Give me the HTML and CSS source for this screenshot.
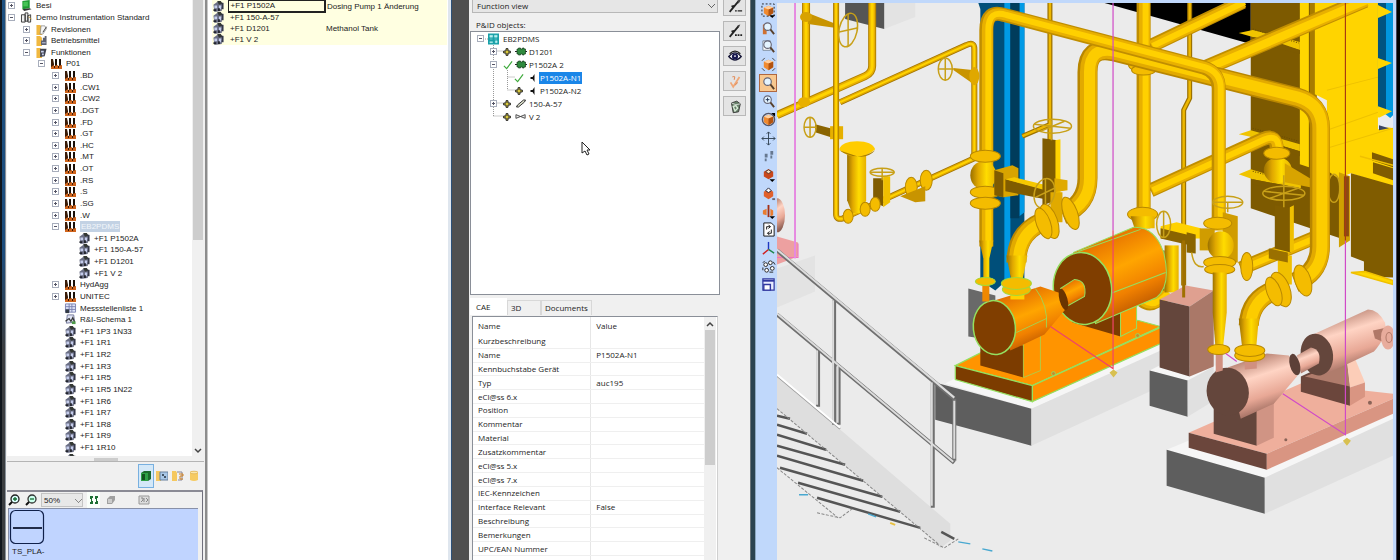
FILE: index.html
```html
<!DOCTYPE html>
<html lang="de">
<head>
<meta charset="utf-8">
<title>P&amp;ID objects</title>
<link rel="stylesheet" href="styles.css">
</head>
<body>
<svg class="defs" aria-hidden="true">
  <defs>
    <symbol id="i-plant" viewBox="0 0 13 11"><path d="M1 11V1h2l1 5V11z" fill="#3a1c08"/><path d="M5 1h2v8H5zM9 1h2v8H9z" fill="#1a1008"/><path d="M1 9l3-2v1l4-1v1l4-1v4H1z" fill="#d0641c"/><path d="M4 8h1v2H4zM8 8h1v2H8z" fill="#3a1c08"/></symbol>
    <symbol id="i-func" viewBox="0 0 13 12"><path d="M1 4l4-3 6 1-1 9-8 1z" fill="#6a6e84"/><path d="M5 0h4l2 3-4 1z" fill="#343834"/><path d="M2 5h3v3H2zM7 5h3l-1 4H7z" fill="#c4ccec"/><path d="M1 9h3v2H1zM6 8h2v3H6z" fill="#22242c"/><path d="M10 2h2v7h-2z" fill="#34384a"/></symbol>
    <symbol id="i-book" viewBox="0 0 13 12"><path d="M2 1l8-1v9l-8 1z" fill="#1f9a33"/><path d="M3 2h5v5H3z" fill="#45c455"/><path d="M2 10l8-1 2 1-8 2z" fill="#333"/></symbol>
    <symbol id="i-proj" viewBox="0 0 13 12"><path d="M1 3h4v8H1zM5 1h3v9H5zM8 4l3-1v8H8z" fill="#eee" stroke="#333"/><path d="M9 5l3 3" stroke="#c8a030"/></symbol>
    <symbol id="i-rev" viewBox="0 0 13 12"><path d="M1 1h4l2 2v9H1z" fill="#f0b840"/><path d="M6 2h4l2 3-4 6H5z" fill="#f5f5f5" stroke="#777" stroke-width=".7"/><path d="M8 9l4-6" stroke="#333"/></symbol>
    <symbol id="i-equip" viewBox="0 0 13 12"><path d="M1 1h4l2 2v9H1z" fill="#f0b840"/><path d="M6 6h2V3h2V1h2v10H6z" fill="#5c6070"/><path d="M7 8h4v1H7z" fill="#c9d2ee"/></symbol>
    <symbol id="i-funcs" viewBox="0 0 13 12"><path d="M1 1h4l2 2v9H1z" fill="#f0b840"/><path d="M5 2h7l-2 8-5 1z" fill="#404452"/><path d="M6 4h3v2H6zM7 7h2v2H7z" fill="#c9d2ee"/></symbol>
    <symbol id="i-list" viewBox="0 0 13 12"><path d="M1 1h11v9H1z" fill="#dfe5f8" stroke="#7a80b0"/><path d="M5 1v9M8 1v9M1 4h11M1 7h11" stroke="#7a80b0"/><path d="M1 7h4v4H1z" fill="#333a44"/></symbol>
    <symbol id="i-schema" viewBox="0 0 13 12"><path d="M3 1h7l1 8-9 1z" fill="#dfe3f4" stroke="#6d7396"/><path d="M1 8l4-3 2 3 2-4 2 5" fill="none" stroke="#333" stroke-width="1.3"/><path d="M8 8h4v3H8z" fill="#4f9a4a"/></symbol>
    <symbol id="i-mark" viewBox="0 0 8 8"><path d="M3 .7h2V3h2.3v2H5v2.300H3V5H.7V3H3z" fill="#d8c840" stroke="#222" stroke-width="1"/></symbol>
    <symbol id="i-check" viewBox="0 0 11 10"><path d="M1 6l3 3 6-8" fill="none" stroke="#3faa3c" stroke-width="1.300"/></symbol>
    <symbol id="i-vessel" viewBox="0 0 12 9"><path d="M0 4.500h12" stroke="#222"/><path d="M2 2h1.500V1h2v1h2V1H9v1h1.500v5H9v1H7.500V7h-2v1h-2V7H2z" fill="#2f8a3e" stroke="#173f1d" stroke-width=".7"/></symbol>
    <symbol id="i-nozzle" viewBox="0 0 6 8"><path d="M5 0v8L3 5H1V3h2z" fill="#111"/></symbol>
    <symbol id="i-pipe" viewBox="0 0 11 9"><path d="M1 8l1-2 6-5 2 0-1 2-6 5z" fill="#d8dcc8" stroke="#222" stroke-width=".9"/></symbol>
    <symbol id="i-valve" viewBox="0 0 13 7"><path d="M1 1.500v4l5-2 5 2v-4l-5 2z" fill="#eee" stroke="#333" stroke-width=".9"/></symbol>
    <symbol id="i-cube" viewBox="0 0 16 16"><path d="M3 5l5-2 5 2v6l-5 3-5-3z" fill="#f08a30"/><path d="M3 5l5-2 5 2-5 2z" fill="#ffd0a0"/><path d="M8 7l5-2v6l-5 3z" fill="#b35410"/></symbol>
    <symbol id="i-lens" viewBox="0 0 16 16"><circle cx="7" cy="6" r="4" fill="#e4f4ff" stroke="#667" stroke-width="1.200"/><path d="M10 9l4 5" stroke="#58402c" stroke-width="2"/></symbol>
    <path id="rA" d="M806 3V103M872 3V66Q872 73 865 76L777 115"/>
    <path id="rB" d="M836 3V214Q836 220 843 218L974 158M840 102L966 45Q974 41 974 49V160"/>
    <path id="rC" d="M1022 136L1050 124M1049.500 3V140M1189 3V98L1183 110V285"/>
    <path id="rD" d="M1143 228V3M1150 46L1242 2M1150 190L1262 139Q1276 133 1276 150"/>
    <path id="rE" d="M1200 70L1364 0"/>
    <path id="rF" d="M1062 214Q1087 204 1087 178V72Q1087 46 1112 51L1295 97Q1319 104 1319 128V246Q1319 272 1294 282"/>
    <path id="rG" d="M986 246V30Q986 9 1004 15L1202 67Q1218 72 1218 88V230"/>
    <path id="rH" d="M1050 219Q1016 228 1016 262M1280 288Q1249 296 1248 325"/>
    <path id="rI" d="M1240 268L1312 238M1142 300Q1152 308 1166 292"/>
    <linearGradient id="gy"><stop offset="0" stop-color="#9a7000"/><stop offset=".3" stop-color="#e0a800"/><stop offset=".62" stop-color="#ffdc00"/><stop offset="1" stop-color="#e6b000"/></linearGradient>
    <linearGradient id="go" x1=".2" y1="0" x2=".65" y2="1"><stop offset="0" stop-color="#dc5c00"/><stop offset=".45" stop-color="#ffa500"/><stop offset=".7" stop-color="#f08000"/><stop offset="1" stop-color="#a84800"/></linearGradient>
    <linearGradient id="gp" x1=".3" y1="0" x2=".65" y2="1"><stop offset="0" stop-color="#a87060"/><stop offset=".35" stop-color="#ffd4c4"/><stop offset=".65" stop-color="#e8a896"/><stop offset="1" stop-color="#7a5046"/></linearGradient>
  </defs>
</svg>

<main class="desk">
  <div class="edge"></div>

  <section class="explorer">
    <div class="explorer-top">
      <ul class="tree">
        <li class="l0"><button class="tg plus" aria-label="Besi"></button><svg class="ic"><use href="#i-book"/></svg><span>Besi</span></li>
        <li class="l0"><button class="tg" aria-label="Demo"></button><svg class="ic"><use href="#i-proj"/></svg><span>Demo Instrumentation Standard</span></li>
        <li class="l1"><button class="tg plus" aria-label="Revisionen"></button><svg class="ic"><use href="#i-rev"/></svg><span>Revisionen</span></li>
        <li class="l1"><button class="tg plus" aria-label="Betriebsmittel"></button><svg class="ic"><use href="#i-equip"/></svg><span>Betriebsmittel</span></li>
        <li class="l1"><button class="tg" aria-label="Funktionen"></button><svg class="ic"><use href="#i-funcs"/></svg><span>Funktionen</span></li>
        <li class="l2"><button class="tg" aria-label="P01"></button><svg class="ic"><use href="#i-plant"/></svg><span>P01</span></li>
        <li class="l3"><button class="tg plus" aria-label="BD"></button><svg class="ic"><use href="#i-plant"/></svg><span>.BD</span></li>
        <li class="l3"><button class="tg plus" aria-label="CW1"></button><svg class="ic"><use href="#i-plant"/></svg><span>.CW1</span></li>
        <li class="l3"><button class="tg plus" aria-label="CW2"></button><svg class="ic"><use href="#i-plant"/></svg><span>.CW2</span></li>
        <li class="l3"><button class="tg plus" aria-label="DGT"></button><svg class="ic"><use href="#i-plant"/></svg><span>.DGT</span></li>
        <li class="l3"><button class="tg plus" aria-label="FD"></button><svg class="ic"><use href="#i-plant"/></svg><span>.FD</span></li>
        <li class="l3"><button class="tg plus" aria-label="GT"></button><svg class="ic"><use href="#i-plant"/></svg><span>.GT</span></li>
        <li class="l3"><button class="tg plus" aria-label="HC"></button><svg class="ic"><use href="#i-plant"/></svg><span>.HC</span></li>
        <li class="l3"><button class="tg plus" aria-label="MT"></button><svg class="ic"><use href="#i-plant"/></svg><span>.MT</span></li>
        <li class="l3"><button class="tg plus" aria-label="OT"></button><svg class="ic"><use href="#i-plant"/></svg><span>.OT</span></li>
        <li class="l3"><button class="tg plus" aria-label="RS"></button><svg class="ic"><use href="#i-plant"/></svg><span>.RS</span></li>
        <li class="l3"><button class="tg plus" aria-label="S"></button><svg class="ic"><use href="#i-plant"/></svg><span>.S</span></li>
        <li class="l3"><button class="tg plus" aria-label="SG"></button><svg class="ic"><use href="#i-plant"/></svg><span>.SG</span></li>
        <li class="l3"><button class="tg plus" aria-label="W"></button><svg class="ic"><use href="#i-plant"/></svg><span>.W</span></li>
        <li class="l3"><button class="tg" aria-label="EB2PDMS"></button><svg class="ic"><use href="#i-plant"/></svg><span class="dim-sel">EB2PDMS</span></li>
        <li class="l4"><i class="no-tg"></i><svg class="ic"><use href="#i-func"/></svg><span>+F1 P1502A</span></li>
        <li class="l4"><i class="no-tg"></i><svg class="ic"><use href="#i-func"/></svg><span>+F1 150-A-57</span></li>
        <li class="l4"><i class="no-tg"></i><svg class="ic"><use href="#i-func"/></svg><span>+F1 D1201</span></li>
        <li class="l4"><i class="no-tg"></i><svg class="ic"><use href="#i-func"/></svg><span>+F1 V 2</span></li>
        <li class="l3"><button class="tg plus" aria-label="HydAgg"></button><svg class="ic"><use href="#i-plant"/></svg><span>HydAgg</span></li>
        <li class="l3"><button class="tg plus" aria-label="UNITEC"></button><svg class="ic"><use href="#i-plant"/></svg><span>UNITEC</span></li>
        <li class="l3"><i class="no-tg"></i><svg class="ic"><use href="#i-list"/></svg><span>Messstellenliste 1</span></li>
        <li class="l3"><i class="no-tg"></i><svg class="ic"><use href="#i-schema"/></svg><span>R&amp;I-Schema 1</span></li>
        <li class="l3"><i class="no-tg"></i><svg class="ic"><use href="#i-func"/></svg><span>+F1 1P3 1N33</span></li>
        <li class="l3"><i class="no-tg"></i><svg class="ic"><use href="#i-func"/></svg><span>+F1 1R1</span></li>
        <li class="l3"><i class="no-tg"></i><svg class="ic"><use href="#i-func"/></svg><span>+F1 1R2</span></li>
        <li class="l3"><i class="no-tg"></i><svg class="ic"><use href="#i-func"/></svg><span>+F1 1R3</span></li>
        <li class="l3"><i class="no-tg"></i><svg class="ic"><use href="#i-func"/></svg><span>+F1 1R5</span></li>
        <li class="l3"><i class="no-tg"></i><svg class="ic"><use href="#i-func"/></svg><span>+F1 1R5 1N22</span></li>
        <li class="l3"><i class="no-tg"></i><svg class="ic"><use href="#i-func"/></svg><span>+F1 1R6</span></li>
        <li class="l3"><i class="no-tg"></i><svg class="ic"><use href="#i-func"/></svg><span>+F1 1R7</span></li>
        <li class="l3"><i class="no-tg"></i><svg class="ic"><use href="#i-func"/></svg><span>+F1 1R8</span></li>
        <li class="l3"><i class="no-tg"></i><svg class="ic"><use href="#i-func"/></svg><span>+F1 1R9</span></li>
        <li class="l3"><i class="no-tg"></i><svg class="ic"><use href="#i-func"/></svg><span>+F1 1R10</span></li>
        <li class="l3"><i class="no-tg"></i><svg class="ic"><use href="#i-func"/></svg><span>+F1 1R11</span></li>
      </ul>
      <div class="vbar"><div class="vthumb"></div><svg class="chev" viewBox="0 0 8 6"><path d="M1 1l3 3 3-3" fill="none" stroke="#444" stroke-width="1.500"/></svg></div>
    </div>
    <div class="grip"></div>
    <div class="mode-bar">
      <button class="mode on" aria-label="Green"><svg viewBox="0 0 12 12"><path d="M1 3l3-2h7v8l-3 2H1z" fill="#1d6b2c"/><path d="M1 3h7v8H1z" fill="#2fa045"/><path d="M2 4h3v6H2z" fill="#14541f"/></svg></button>
      <button class="mode" aria-label="Liste"><svg viewBox="0 0 12 12"><path d="M0 1h4l1 2v8H0z" fill="#f5c860"/><path d="M4 2h8v8H4z" fill="#a9c8e8" stroke="#68809c"/><path d="M6 4h2v2H6zM8 6h2v2H8z" fill="#456"/></svg></button>
      <button class="mode" aria-label="Kopie"><svg viewBox="0 0 12 12"><path d="M0 1h4l1 2v8H0z" fill="#f5c860"/><path d="M5 2h5v8H6" fill="none" stroke="#889"/><path d="M7 4h4v2H8v3h3" fill="none" stroke="#d08020"/></svg></button>
      <button class="mode" aria-label="Datenbank"><svg viewBox="0 0 12 12"><path d="M2 2q4-2 8 0v8q-4 2-8 0z" fill="#f6cb62"/><ellipse cx="6" cy="2.500" rx="4" ry="1.300" fill="#fbe7ab" stroke="#d8a848" stroke-width=".6"/></svg></button>
    </div>
    <div class="preview">
      <div class="zoom-bar">
        <button class="zb" aria-label="Zoom in"><svg viewBox="0 0 12 12"><circle cx="7" cy="5" r="4" fill="#dff" stroke="#222" stroke-width="1.300"/><path d="M5 5h4M7 3v4" stroke="#146b30" stroke-width="1.300"/><path d="M4 8l-3 3" stroke="#111" stroke-width="2"/></svg></button>
        <button class="zb" aria-label="Zoom out"><svg viewBox="0 0 12 12"><circle cx="7" cy="5" r="4" fill="#cfe" stroke="#333" stroke-width="1.300"/><path d="M5 5h4" stroke="#146b30" stroke-width="1.300"/><path d="M4 8l-3 3" stroke="#111" stroke-width="2"/></svg></button>
        <select class="pct" aria-label="Zoom"><option>50%</option></select>
        <button class="zb lit" aria-label="Raster"><svg viewBox="0 0 12 12"><path d="M2 2h3v2H4v3h1v3H2V8h1V5H2zM7 2h3v2H9v3h1v3H7V8h1V5H7z" fill="#1d7034"/></svg></button>
        <button class="zb" aria-label="3D"><svg viewBox="0 0 12 12"><path d="M2 5l3-3 5 0v4l-3 4H2z" fill="#a0a0a0"/><path d="M3 5h4v4H3z" fill="#ccc"/></svg></button>
        <button class="zb end" aria-label="Bild"><svg viewBox="0 0 12 12"><path d="M1 2h10v8H1z" fill="#ddd" stroke="#999"/><path d="M3 4h2v2l-2 2M6 4v4M8 4l2 2-2 2" fill="none" stroke="#888"/></svg></button>
      </div>
      <div class="canvas">
        <figure class="tile"><svg viewBox="0 0 36 36"><rect x="1.500" y="1.500" width="33" height="33" rx="5" fill="none" stroke="#10204a" stroke-width="1.200"/><path d="M4 19h29" stroke="#222c48" stroke-width="2"/></svg><figcaption>TS_PLA-</figcaption></figure>
      </div>
    </div>
  </section>

  <section class="sheet">
    <table class="list">
      <tr><td class="li"><svg class="ic"><use href="#i-func"/></svg></td><td class="cell-on">+F1 P1502A</td><td>Dosing Pump 1 Änderung</td></tr>
      <tr><td class="li"><svg class="ic"><use href="#i-func"/></svg></td><td>+F1 150-A-57</td><td></td></tr>
      <tr><td class="li"><svg class="ic"><use href="#i-func"/></svg></td><td>+F1 D1201</td><td>Methanol Tank</td></tr>
      <tr><td class="li"><svg class="ic"><use href="#i-func"/></svg></td><td>+F1 V 2</td><td></td></tr>
    </table>
  </section>
  <div class="gap-bar"></div>

  <section class="pid">
    <div class="pid-main">
      <select class="view-sel" aria-label="View"><option>Function view</option></select>
      <h2 class="cap">P&amp;ID objects:</h2>
      <ul class="objs">
        <li><button class="tg" aria-label="EB2PDMS"></button><svg class="root-ic" viewBox="0 0 12 12"><path d="M0 0h12v12H0z" fill="#18a0a8"/><path d="M2 2h3v2H2zM7 2h3v2H7zM2 6h3M7 6h3M2 9h3v1H2zM8 8h2v2H8z" fill="#b8f0f0" stroke="#b8f0f0" stroke-width=".5"/></svg><span>EB2PDMS</span></li>
        <li class="o1"><button class="tg plus" aria-label="D1201"></button><svg class="mk"><use href="#i-mark"/></svg><svg class="oi"><use href="#i-vessel"/></svg><span>D1201</span></li>
        <li class="o1"><button class="tg" aria-label="P1502A"></button><svg class="ck"><use href="#i-check"/></svg><svg class="oi"><use href="#i-vessel"/></svg><span>P1502A 2</span></li>
        <li class="o2"><svg class="ck"><use href="#i-check"/></svg><svg class="oi"><use href="#i-nozzle"/></svg><span class="sel">P1502A-N1</span></li>
        <li class="o2"><svg class="mk"><use href="#i-mark"/></svg><svg class="oi"><use href="#i-nozzle"/></svg><span>P1502A-N2</span></li>
        <li class="o1"><button class="tg plus" aria-label="150-A-57"></button><svg class="mk"><use href="#i-mark"/></svg><svg class="oi"><use href="#i-pipe"/></svg><span>150-A-57</span></li>
        <li class="o1"><i class="no-tg"></i><svg class="mk"><use href="#i-mark"/></svg><svg class="oi"><use href="#i-valve"/></svg><span>V 2</span></li>
        <svg class="wires" viewBox="0 0 80 92"><path d="M14 7h3M22.500 13V84M22.500 19h9M22.500 71h9M22.500 84h9M36.500 38v20M36.500 45h7M36.500 58h8" fill="none" stroke="#999" stroke-dasharray="1 1"/></svg>
        <svg class="cursor" viewBox="0 0 10 15"><path d="M1 1v11l3-2 2 4 2-1-2-4h3z" fill="#fff" stroke="#222"/></svg>
      </ul>
      <div class="tabs"><button class="tab on">CAE</button><button class="tab">3D</button><button class="tab">Documents</button></div>
      <div class="props">
        <table class="attr">
          <thead><tr><th>Name</th><th>Value</th></tr></thead>
          <tbody>
          <tr><td>Kurzbeschreibung</td><td></td></tr>
          <tr><td>Name</td><td>P1502A-N1</td></tr>
          <tr><td>Kennbuchstabe Gerät</td><td></td></tr>
          <tr><td>Typ</td><td>auc195</td></tr>
          <tr><td>eCl@ss 6.x</td><td></td></tr>
          <tr><td>Position</td><td></td></tr>
          <tr><td>Kommentar</td><td></td></tr>
          <tr><td>Material</td><td></td></tr>
          <tr><td>Zusatzkommentar</td><td></td></tr>
          <tr><td>eCl@ss 5.x</td><td></td></tr>
          <tr><td>eCl@ss 7.x</td><td></td></tr>
          <tr><td>IEC-Kennzeichen</td><td></td></tr>
          <tr><td>Interface Relevant</td><td>False</td></tr>
          <tr><td>Beschreibung</td><td></td></tr>
          <tr><td>Bemerkungen</td><td></td></tr>
          <tr><td>UPC/EAN Nummer</td><td></td></tr>
          <tr><td>Beschreibung (Englisch)</td><td></td></tr>
          </tbody>
        </table>
        <div class="vbar wide"><svg class="chev" viewBox="0 0 8 6"><path d="M1 5l3-3 3 3" fill="none" stroke="#444" stroke-width="1.500"/></svg><div class="vthumb"></div></div>
      </div>
    </div>
    <div class="pid-side">
      <button class="sb" aria-label="Link"><svg viewBox="0 0 18 16"><path d="M3 14L13 2M5 8l4-1" stroke="#222" stroke-width="2"/><path d="M12 1l4-1-3 5z" fill="#444"/><path d="M9 13h2M12 13h5" stroke="#222" stroke-width="1.500"/></svg></button>
      <button class="sb" aria-label="Unlink"><svg viewBox="0 0 18 16"><path d="M3 14L13 2M5 8l4-1" stroke="#222" stroke-width="2"/><path d="M12 1l3-1-2 4z" fill="#444"/><path d="M9 12h2M12 12h2M15 12h2" stroke="#222" stroke-width="2"/></svg></button>
      <button class="sb" aria-label="Show"><svg viewBox="0 0 18 16"><path d="M2 8q7-8 14 0q-7 8-14 0z" fill="#fff" stroke="#181838" stroke-width="1.500"/><circle cx="9" cy="8" r="3.500" fill="#181850"/><circle cx="9" cy="7.500" r="1" fill="#fff"/><path d="M3 5q6-6 12 0" fill="none" stroke="#222" stroke-width="1.500"/></svg></button>
      <button class="sb" aria-label="Check"><svg viewBox="0 0 18 16"><path d="M4 9l3 5 7-11" fill="none" stroke="#f0a878" stroke-width="2"/><path d="M6 3q4-2 2 3M9 12l3-3" fill="none" stroke="#e09060" stroke-width="1.300"/></svg></button>
      <button class="sb" aria-label="Delete"><svg viewBox="0 0 18 16"><path d="M5 4l6-2 4 3-2 9-6 1z" fill="#668068" stroke="#333"/><path d="M5 4l5 2 5-1" fill="none" stroke="#ddd"/><path d="M7 8l3-1 2 3-3 3z" fill="none" stroke="#d8ead8" stroke-width="1.500"/></svg></button>
    </div>
  </section>
  <div class="teal-bar"></div>

  <section class="viewer">
    <nav class="tools">
      <button class="tb" aria-label="Select"><svg viewBox="0 0 16 16"><use href="#i-cube"/><path d="M1 1h13v13H1z" fill="none" stroke="#222" stroke-dasharray="2 2"/><path d="M9 13h6l-3 3z"/></svg></button>
      <button class="tb" aria-label="Zoom selection"><svg viewBox="0 0 16 16"><path d="M2 4l4-2v12H2z" fill="#d07030"/><use href="#i-lens"/></svg></button>
      <button class="tb" aria-label="Zoom page"><svg viewBox="0 0 16 16"><path d="M2 2h8v10H2z" fill="#fff" stroke="#789"/><use href="#i-lens"/></svg></button>
      <button class="tb" aria-label="Fit all"><svg viewBox="0 0 16 16"><use href="#i-cube"/><path d="M1 4l3-3M12 1l3 3M1 12l3 3M12 15l3-3" stroke="#444"/></svg></button>
      <button class="tb hot" aria-label="Zoom area"><svg viewBox="0 0 16 16"><use href="#i-lens"/></svg></button>
      <button class="tb" aria-label="Zoom in"><svg viewBox="0 0 16 16"><use href="#i-lens"/><path d="M5 6h4M7 4v4" stroke="#235"/></svg></button>
      <button class="tb" aria-label="Rotate"><svg viewBox="0 0 16 16"><circle cx="8" cy="8" r="6.500" fill="none" stroke="#556" stroke-width="1.500"/><use href="#i-cube"/><path d="M11 1h4v4z"/></svg></button>
      <button class="tb" aria-label="Pan"><svg viewBox="0 0 16 16"><path d="M8 1v14M1 8h14M6 3l2-2 2 2M6 13l2 2 2-2M3 6L1 8l2 2M13 6l2 2-2 2" fill="none" stroke="#345"/></svg></button>
      <button class="tb" aria-label="Walk"><svg viewBox="0 0 16 16"><path d="M4 5h3v4H4zM4 10h2v3H4zM10 2h3v4h-3zM10 7h2v3h-2z" fill="#667890"/></svg></button>
      <button class="tb" aria-label="View"><svg viewBox="0 0 16 16"><path d="M3 5l5-3 5 3v5l-5 3-5-3z" fill="#c8481c"/><path d="M5 5l3-2 3 2-3 2z" fill="#ffe0c0" stroke="#222" stroke-width=".7"/><path d="M9 13h6l-3 3z"/></svg></button>
      <button class="tb" aria-label="Orbit"><svg viewBox="0 0 16 16"><path d="M3 6l5-3 5 3v5l-5 3-5-3z" fill="#e0602c"/><path d="M5 5l3-3 3 3-3 2z" fill="#fff" stroke="#223"/><path d="M12 13h3v2h-3z" fill="#667"/></svg></button>
      <button class="tb" aria-label="Clip"><svg viewBox="0 0 16 16"><path d="M2 7l4-2v7l-4-1zM10 5l3 2v5l-3 1z" fill="#e87c30"/><path d="M8 1v13" stroke="#a33018" stroke-width="2"/><path d="M9 13h6l-3 3z"/></svg></button>
      <button class="tb" aria-label="Refresh"><svg viewBox="0 0 16 16"><path d="M3 1h8l3 3v11H3z" fill="#fff" stroke="#111"/><path d="M6 8V5h4M8 3l2 2-2 2M11 8v4H7M9 10l-2 2 2 2" fill="none" stroke="#111"/></svg></button>
      <button class="tb" aria-label="Axes"><svg viewBox="0 0 16 16"><path d="M8 9V1" stroke="#2038c0" stroke-width="1.500"/><path d="M8 9l-6 5" stroke="#d02020" stroke-width="1.500"/><path d="M8 9l6 4" stroke="#20884c" stroke-width="1.500"/></svg></button>
      <button class="tb" aria-label="Network"><svg viewBox="0 0 16 16"><g fill="#fff" stroke="#222"><circle cx="5" cy="6" r="2"/><circle cx="10" cy="4" r="2"/><circle cx="12" cy="10" r="2"/><circle cx="6" cy="12" r="2"/></g><path d="M2 4l2-2M13 3l2 3M2 9v3M9 14h4" stroke="#222"/></svg></button>
      <button class="tb" aria-label="Windows"><svg viewBox="0 0 16 16"><path d="M2 2h12v12H2z" fill="#e8ecff" stroke="#3038a0" stroke-width="1.300"/><path d="M2 4h12" stroke="#3038a0" stroke-width="2"/><path d="M3 8h7v6H3z" fill="#fff" stroke="#3038a0" stroke-width="1.500"/></svg></button>
    </nav>

    <svg class="scene" viewBox="777 3 615 557" preserveAspectRatio="xMinYMin slice" role="img" aria-label="3D plant model">
      <path d="M777 3H1392V560H777z" fill="#ebebeb"/>
      <path d="M777 268L815 255V291L777 307zM884 3H915V17L884 29z" fill="#e3e3e3"/>
      <path d="M1104 3H1250V44z"/>
      <path d="M845 3H884V29L845 19z" fill="#555"/>
      <ellipse cx="777" cy="215" rx="8" ry="17" fill="url(#gp)"/>
      <path d="M777 236L798 242V256L777 264z" fill="#eda0a0"/>
      <path d="M777 257H798V243" fill="none" stroke="#f070c0"/>

      <!-- structural wall and cabinets -->
      <path d="M1250 3H1312V130L1340 165V238L1250 208z" fill="#7d5a00"/>
      <path d="M1299 3H1308V167L1299 164z" fill="#ffd600"/>
      <path d="M1309 3H1316V110H1309z" fill="#a87c00"/>
      <path d="M1314 3H1377V125L1392 128V187L1350 173L1337 178L1326 170V100L1314 94z" fill="#ffd400"/>
      <path d="M1326 90L1377 77M1326 130L1377 112M1326 148L1392 128" stroke="#eec200"/>
      <path d="M1377 3H1392V120L1377 108z" fill="#0097de"/><path d="M1377 3H1385V112L1377 108z" fill="#005480"/>
      <path d="M1377 5L1391 12L1377 18zM1377 58L1391 63L1377 69zM1377 106L1391 111L1377 118z" fill="#ffd600"/>
      <path d="M1377 117L1386 121L1392 115V126L1377 129z" fill="#e8ecf2"/><path d="M1378 125L1388 128L1378 130z" fill="#3a4664"/>
      <path d="M1371 152L1392 159V167L1371 160zM1372 162L1392 168V180L1372 173zM1350 173L1392 185V277L1363 276V261L1350 256z" fill="#805c00"/>
      <path d="M1359 156L1392 165M1350 272L1364 271L1392 280V284z" stroke="#f0c000" stroke-width="1.500" fill="#ffd600"/>
      <path d="M1338 172L1349 176V240L1338 247z" fill="#d0a000"/><path d="M1343 176H1348V236H1343z" fill="#8c4a10"/>
      <path d="M1238 33L1252 30L1299 42L1299 50L1270 40L1252 37zM1238 134L1250 130L1299 144V151L1252 137zM1238 174L1250 169L1300 184V188L1252 179z" fill="#f0c400"/>
      <path d="M1252 37L1299 50V54L1252 42zM1252 137L1299 151V156L1252 142zM1252 179L1300 188V193L1252 184z" fill="#7d5a00"/>
      <path d="M1252 29L1298 43M1252 128L1298 141M1252 171L1290 181" stroke="#6a4c00" stroke-dasharray="1 1.500"/>
      <ellipse cx="1333" cy="188" rx="6" ry="14" class="wheel"/>

      <!-- blue column -->
      <path d="M978 3H1024V280H1006L995 290L980 280V9z" fill="#004f7a"/>
      <path d="M1004 3H1010V282H1004zM1019 3H1024V212L1019 216z" fill="#009ae6"/><path d="M1010 3H1019V218H1010z" fill="#003c5c"/>

      <!-- small bore lines -->
      <g class="pp"><use href="#rA" class="d8"/><use href="#rA" class="m8"/><use href="#rA" class="h8"/></g>
      <path d="M808 13L836 24V28L808 24zM953 68L972 70V83L953 70z" fill="#c89400"/>
      <path d="M815 124L834 129V138L815 132z" fill="#8a6400"/><path d="M830 126H843V139H830z" fill="#e6b000"/>
      <g class="pp"><use href="#rB" class="d6"/><use href="#rB" class="m6"/><use href="#rB" class="h6"/></g>
      <g class="wheel"><ellipse cx="848" cy="30" rx="9" ry="17" transform="rotate(12 848 30)"/><path d="M848 14V46M839 32L857 28"/><ellipse cx="945" cy="69" rx="7" ry="11"/><path d="M945 59V80M938 69H953"/><ellipse cx="810" cy="127" rx="6" ry="10"/><path d="M810 117V137M804 127H816"/></g>
      <ellipse cx="806" cy="17" rx="6" ry="5" fill="#d8a200"/><ellipse cx="804" cy="102" rx="6" ry="5" fill="#e8b000"/><ellipse cx="974" cy="76" rx="5" ry="9" fill="#e0a800"/>
      <path d="M847 152H866V200L861 213H852L847 200z" fill="url(#gy)"/><path d="M839 149Q842 141 857 141Q872 141 875 149Q868 156 857 156Q845 156 839 149z" fill="#ffcc00"/><path d="M839 150Q857 162 875 150Q868 158 857 156z" fill="#a87c00"/>
      <path d="M873 178H883V206L873 202z" fill="#805c00"/><path d="M883 176H890V202L883 207z" fill="#f0c000"/>
      <g class="wheel"><ellipse cx="882" cy="172" rx="12" ry="4"/><path d="M870 172H894M882 168V180"/></g>
      <g class="fl"><ellipse cx="848" cy="216" rx="5" ry="7"/><ellipse cx="865" cy="209" rx="5" ry="7"/><ellipse cx="875" cy="204" rx="5" ry="7"/><ellipse cx="911" cy="187" rx="6" ry="10"/><ellipse cx="926" cy="180" rx="6" ry="10"/></g>
      <path d="M900 196L925 186V201L915 202z" fill="#c89400"/>

      <!-- thin risers and secondary headers -->
      <g class="pp"><use href="#rC" class="d5"/><use href="#rC" class="m5"/></g>
      <g class="pp"><use href="#rD" class="d14"/><use href="#rD" class="m14"/><use href="#rD" class="h14"/></g>
      <g class="pp"><use href="#rI" class="d14"/><use href="#rI" class="m14"/><use href="#rI" class="h14"/></g>
      <g class="pp"><use href="#rE" class="d16"/><use href="#rE" class="m16"/><use href="#rE" class="h16"/></g>

      <!-- suction and discharge headers -->
      <g class="fl"><ellipse cx="1143" cy="65" rx="15" ry="7"/><ellipse cx="1143" cy="70" rx="12" ry="5"/><ellipse cx="1142" cy="214" rx="15" ry="7"/></g>
      <path d="M1130 216H1154V228H1134z" fill="url(#gy)"/>
      <g class="pp"><use href="#rF" class="d20"/><use href="#rF" class="m20"/><use href="#rF" class="h20"/></g>
      <g class="pp"><use href="#rG" class="d14"/><use href="#rG" class="m14"/><use href="#rG" class="h14"/></g>
      <g class="pp"><use href="#rH" class="d20"/><use href="#rH" class="m20"/><use href="#rH" class="h20"/></g>

      <!-- valve on first suction line -->
      <path d="M979 240H993L989 258V282H983V258z" fill="url(#gy)"/>
      <ellipse cx="983" cy="175" rx="13" ry="14" fill="url(#gy)"/>
      <g class="fl"><ellipse cx="985" cy="156" rx="15" ry="6"/><ellipse cx="985" cy="192" rx="15" ry="6"/><ellipse cx="985" cy="203" rx="15" ry="6"/></g>
      <path d="M994 170L1012 165L1018 168V195L1003 197L994 195z" fill="#d8a400"/><path d="M994 170L1003 173V197L994 195zM1005 179L1045 189V199L1005 191z" fill="#805c00"/><path d="M1005 179L1014 177L1050 186L1045 190z" fill="#f6c800"/>
      <path d="M1042 138L1057 140V200L1042 205z" fill="#805c00"/><path d="M1055 140L1060 139V195L1055 200z" fill="#ffd200"/><path d="M1054 178L1067 180V190L1054 192zM1050 192H1062V222H1050z" fill="#e0aa00"/>
      <g class="wheel"><ellipse cx="1052" cy="126" rx="19" ry="7"/><path d="M1034 124L1070 128M1040 131L1064 121M1051 120V140"/><ellipse cx="1044" cy="193" rx="10" ry="15" transform="rotate(15 1044 193)"/><path d="M1035 197L1054 188M1045 178V208"/></g>
      <g class="fl"><ellipse cx="1070" cy="213" rx="7" ry="17" transform="rotate(-20 1070 213)"/><ellipse cx="1049" cy="221" rx="8" ry="18" transform="rotate(-20 1049 221)"/><ellipse cx="1043" cy="223" rx="7" ry="16" transform="rotate(-20 1043 223)"/></g>
      <path d="M1006 255H1027L1022 280H1011z" fill="url(#gy)"/>

      <!-- second valve group -->
      <path d="M1160 226L1176 222L1200 228V238L1160 238z" fill="#ffd200"/><path d="M1160 228L1186 234V252L1195 253V234L1186 232V244L1160 238zM1156 250H1164V290H1156z" fill="#8a6400"/><path d="M1164 245H1178V292H1164z" fill="url(#gy)"/>
      <path d="M1222 212L1237 216V262H1222z" fill="#d09c00"/><path d="M1199 228H1214V250H1199z" fill="#d09c00"/>
      <ellipse cx="1220" cy="245" rx="13" ry="14" fill="url(#gy)"/>
      <g class="fl"><ellipse cx="1217" cy="223" rx="14" ry="6"/><ellipse cx="1219" cy="262" rx="16" ry="6"/><ellipse cx="1219" cy="269" rx="15" ry="5"/><ellipse cx="1246" cy="266" rx="6" ry="14"/></g>
      <g class="wheel"><ellipse cx="1163" cy="224" rx="7" ry="13"/><path d="M1163 211V237"/><ellipse cx="1227" cy="202" rx="15" ry="6"/><path d="M1212 202H1242M1227 202V212"/><path d="M1191 252Q1193 268 1203 266"/></g>
      <ellipse cx="1277" cy="170" rx="14" ry="13" fill="url(#gy)"/><path d="M1284 163L1309 178V187L1284 182z" fill="#d8a400"/>
      <g class="fl"><ellipse cx="1276" cy="153" rx="13" ry="6"/></g>
      <path d="M1274 205L1290 208V252L1274 248z" fill="#805c00"/><path d="M1289 207L1293 205V250L1289 252zM1277 255H1291V284H1277z" fill="#f0c000"/><path d="M1268 248L1287 252V262L1268 258z" fill="#9a7000"/>
      <g class="wheel"><ellipse cx="1283" cy="193" rx="21" ry="7"/><path d="M1263 191L1303 195M1269 198L1297 188M1283 175V207"/></g>
      <g class="fl"><ellipse cx="1302" cy="280" rx="8" ry="16" transform="rotate(-18 1302 280)"/><ellipse cx="1280" cy="289" rx="9" ry="18" transform="rotate(-20 1280 289)"/><ellipse cx="1273" cy="291" rx="7" ry="15" transform="rotate(-20 1273 291)"/></g>

      <!-- first pump foundation -->
      <path d="M968 288L995 295V340L968 336z" fill="#696969"/>
      <path d="M945 383L1060 322L1160 326V352L1031 408z" fill="#f6f6f6"/>
      <path d="M935 382L1031 408V445L935 419z" fill="#5e5e5e"/><path d="M1031 408L1160 350V386L1031 445z" fill="#e0e0e0"/>
      <g stroke="#94e060" stroke-width="1.200">
        <path d="M955 365L1060 312L1138 320L1160 326L1032 385z" fill="#ff9400"/><path d="M955 365L1032 385V401L955 379z" fill="#7c3c00"/><path d="M1032 385L1160 327V343L1032 401z" fill="#ff9000"/>
      </g>
      <path d="M1072 318L1095 320L1120 302V336L1072 322z" fill="#7c3c00"/><path d="M1120 305L1136 298V328L1120 336z" fill="#ff9400" stroke="#94e060"/>
      <path d="M1073 252L1133 227Q1154 226 1163 252Q1171 285 1156 297L1095 323z" fill="url(#go)" stroke="#94e060"/>
      <path d="M1110 293L1165 272M1078 251L1140 229" stroke="#94e060"/>
      <ellipse cx="1082" cy="288" rx="29" ry="36" transform="rotate(-8 1082 288)" fill="#803e00" stroke="#94e060" stroke-width="1.500"/>
      <path d="M1060 288L1074 279Q1087 280 1084 296L1066 306z" fill="url(#go)" stroke="#94e060"/>
      <path d="M980 340L1023 345V377L980 365z" fill="#7c3c00"/><path d="M1023 335L1040 320V370L1023 377z" fill="#ff9400" stroke="#94e060" stroke-width=".7"/>
      <path d="M994 300L1040 286L1061 293Q1067 300 1064 310L1044 334L1010 350z" fill="url(#go)"/>
      <path d="M1035 288Q1048 305 1046 327M1016 332L1046 318" fill="none" stroke="#94e060" stroke-width=".8"/>
      <ellipse cx="1063" cy="299" rx="4" ry="11" transform="rotate(-15 1063 299)" fill="#6a3400"/>
      <ellipse cx="994" cy="327" rx="21" ry="27" transform="rotate(-6 994 327)" fill="#803e00" stroke="#94e060" stroke-width="1.500"/>
      <path d="M982 284H989V301H982z" fill="#f08800"/><path d="M1010 288H1024V299H1010z" fill="#ffd000"/>
      <g class="fl hi"><ellipse cx="985" cy="281" rx="10" ry="4"/><ellipse cx="1016" cy="289" rx="14" ry="6"/><ellipse cx="1016" cy="283" rx="15" ry="6"/></g>
      <circle cx="1053" cy="373" r="2" class="bolt"/><circle cx="1137" cy="335" r="2" class="bolt"/>

      <!-- pedestal box -->
      <path d="M1149 370L1159 365L1225 365L1187 380z" fill="#f6f6f6"/><path d="M1149 370L1187 380V416L1149 405z" fill="#5e5e5e"/><path d="M1187 380L1213 366V400L1187 416z" fill="#e0e0e0"/>
      <path d="M1159 299L1185 285L1213 290L1189 306z" fill="#dfa090"/><path d="M1159 299L1189 306V376L1159 367z" fill="#64463c"/><path d="M1189 306L1213 290V366L1189 376z" fill="#aa7868"/><path d="M1183 240V297" stroke="#a07000" stroke-width="3"/>

      <!-- second pump -->
      <path d="M1166 449L1195 437L1392 393V420L1264 477z" fill="#f6f6f6"/><path d="M1166 449L1264 477V513L1166 485z" fill="#5e5e5e"/><path d="M1264 477L1392 418V455L1264 513z" fill="#e0e0e0"/>
      <path d="M1188 432L1300 383L1392 393L1392 398L1266 453z" fill="#efaf9c"/><path d="M1188 432L1266 453V469L1188 447z" fill="#6b463c"/><path d="M1266 453L1392 398V413L1266 469z" fill="#d99582"/>
      <path d="M1300 376L1345 355L1349 386V405L1300 391z" fill="#6b463c"/><path d="M1304 376L1346 360L1349 386z" fill="#b07c6c"/><path d="M1346 360L1354 358L1364 382L1349 387z" fill="#fccdb8"/><path d="M1349 387L1364 382V396L1349 405z" fill="#d99582"/>
      <path d="M1310 335L1367 309Q1377 309 1384 322Q1387 335 1373 351L1322 375z" fill="url(#gp)"/>
      <path d="M1372 330L1386 327V343L1374 338z" fill="#b07868"/><ellipse cx="1387" cy="337" rx="7" ry="12" fill="#e8ac9c"/><ellipse cx="1388" cy="337" rx="3" ry="5" fill="none" stroke="#b07868"/>
      <ellipse cx="1316" cy="354" rx="16" ry="21" transform="rotate(-12 1316 354)" fill="#64463c"/>
      <path d="M1296 355L1310 347Q1321 349 1318 363L1300 373z" fill="url(#gp)"/>
      <path d="M1213 400L1256 405V445L1213 433z" fill="#64463c"/><path d="M1256 400L1273 390V437L1256 445z" fill="#d09484"/>
      <path d="M1227 367L1266 353L1288 355L1296 366V376L1273 403L1240 418z" fill="url(#gp)"/>
      <ellipse cx="1294" cy="364" rx="5" ry="11" transform="rotate(-15 1294 364)" fill="#5c4038"/>
      <ellipse cx="1227" cy="391" rx="21" ry="24" transform="rotate(-10 1227 391)" fill="#64463c"/>
      <path d="M1215 350H1222V370L1215 372zM1244 355H1256V368L1244 369z" fill="#d09080"/>
      <path d="M1212 272H1226V312L1222 350H1215L1212 312z" fill="url(#gy)"/><path d="M1238 318H1258L1255 352H1242z" fill="url(#gy)"/>
      <g class="fl"><ellipse cx="1218" cy="349" rx="11" ry="5"/><ellipse cx="1249" cy="355" rx="15" ry="6"/><ellipse cx="1249" cy="350" rx="15" ry="6"/></g>
      <circle cx="1285" cy="439" r="1.500" fill="#8a6458"/><circle cx="1369" cy="402" r="2" fill="#8a6458"/>

      <!-- reference lines -->
      <g fill="none" stroke="#d04ac8" stroke-width="1.200"><path d="M795 3V258" stroke="#e68ae0" stroke-width="2"/><path d="M1112.500 3V230"/><path d="M1112.500 230V368L1050 326" stroke="#f04468"/><path d="M1225 353L1236 361M1282 393L1344.500 434V240"/><path d="M1344.500 240V3" stroke="#a83c10"/></g>
      <path d="M1109 372L1113 369L1117 372L1113 377zM1342 440L1346 437L1350 440L1346 445z" fill="#d8c050"/>

      <!-- stairs and handrail -->
      <path d="M777 375L950 523V540L940 547L920 528L777 408z" fill="#dedede"/>
      <path d="M777 415L790 418M777 424L807 433M777 434L826 449M777 445L845 464M777 455L863 480M780 467L882 496M798 482L900 511M817 497L920 527M941 531L954 538" fill="none" stroke="#555" stroke-width="2.500"/>
      <path d="M777 408L938 543M777 467L838 517M817 512L840 517L852 508M924 537L944 547L958 538" fill="none" stroke="#888" stroke-dasharray="3 1.500"/>
      <path d="M799 494H808M868 513L876 516M958 541L970 543M982 548L992 550" stroke="#48a8d0" stroke-width="1.500"/><path d="M890 522L895 524" stroke="#e8c040" stroke-width="2"/>
      <g fill="none" stroke="#707070" stroke-width="4"><path d="M818 350V406M834 300V424M838.500 365V424M932.500 382V507M954 398V460"/><path d="M777 250L954 398M777 314L954 462"/><path d="M777 375L840 428" stroke-width="2" stroke="#999"/></g>
      <g fill="none" stroke="#dcdcdc" stroke-width="2"><path d="M817 350V404M833 300V422M837.500 365V422M931.500 382V505M954 400V458"/><path d="M777 249L954 397M777 313L953 461"/><path d="M777 374L840 427" stroke="#fff"/></g>
    </svg>
  </section>
  <div class="edge-right"></div>
</main>
</body>
</html>
```
FILE: styles.css
```css
* { box-sizing: border-box; }
body { margin: 0; background: #505050; color: #222; font: 8px/11px "Liberation Sans", Arial, sans-serif; }
button, select { font: inherit; color: inherit; margin: 0; padding: 0; border: 0; background: none; border-radius: 0; }
ul { list-style: none; margin: 0; padding: 0; }
svg { display: block; flex: none; }
.defs { position: absolute; width: 0; height: 0; }
.desk { display: flex; height: 100vh; overflow: hidden; }
.edge { flex: none; width: 6px; background: linear-gradient(90deg, #10161c 0 2px, transparent 2px 5px, #8a929a 5px), linear-gradient(#1d5080, #1c4c7c 45%, #3a3d40 62%); }

/* project explorer */
.explorer { flex: none; width: 201px; display: flex; flex-direction: column; background: #f0f0f0; border-right: 2px solid #8c8c8c; padding: 0 1px; }
.explorer-top { display: flex; flex: 1; min-height: 0; overflow: hidden; background: #fff; }
.tree { flex: 1; display: grid; grid-auto-rows: 1fr; height: 465px; padding-left: 1px; white-space: nowrap; }
.tree li { display: flex; align-items: center; min-height: 0; height: 100%; }
.tree .l1 { padding-left: 15px; }
.tree .l2 { padding-left: 30px; }
.tree .l3 { padding-left: 44px; }
.tree .l4 { padding-left: 58px; }
.tg { flex: none; width: 7px; height: 7px; border: 1px solid #a8aebc; background: linear-gradient(#556, #556) center / 3px 1px no-repeat #fff; }
.tg.plus { background: linear-gradient(#556, #556) center / 3px 1px no-repeat, linear-gradient(#556, #556) center / 1px 3px no-repeat, #fff; }
.no-tg { flex: none; width: 7px; }
.ic { width: 13px; height: 12px; }
.tree .ic { margin: 0 3px 0 5px; height: 11px; }
.dim-sel { background: #c3d2e4; color: #f2f6fa; padding: 0 1px; line-height: 11px; }
.vbar { flex: none; width: 12px; display: flex; flex-direction: column; justify-content: space-between; align-items: center; background: #f0f0f0; }
.vbar .vthumb { width: 10px; height: 240px; background: #cdcdcd; }
.chev { width: 8px; height: 6px; margin-bottom: 2px; }
.grip { flex: none; height: 6px; border-bottom: 1px solid #b4b4b4; background: linear-gradient(#ccc, #ccc) center 2px / 24px 3px no-repeat; }
.mode-bar { flex: none; display: flex; justify-content: flex-end; align-items: center; height: 28px; padding-right: 2px; }
.mode { display: grid; place-items: center; width: 16px; height: 24px; }
.mode svg { width: 12px; height: 12px; }
.mode.on { background: #d4e8f8; border: 1px solid #78b0e0; }
.preview { flex: none; height: 70px; border-top: 2px solid #8a8a94; border-right: 1px solid #70707c; margin-right: 1px; }
.zoom-bar { display: flex; align-items: center; height: 16px; gap: 4px; }
.zb { display: grid; place-items: center; width: 13px; height: 16px; }
.zb svg { width: 12px; height: 12px; }
.zb.lit { background: #fafffa; }
.zb.end { margin-left: 16px; }
.pct { width: 42px; height: 14px; border: 1px solid #c4c4c4; appearance: none; padding-left: 2px; background: linear-gradient(45deg, transparent 45%, #888 45% 60%, transparent 60%) 33px 5px / 4px 4px no-repeat, linear-gradient(-45deg, transparent 45%, #888 45% 60%, transparent 60%) 36px 5px / 4px 4px no-repeat, #e8e8e8; }
.canvas { height: 52px; margin: 0 4px 0 1px; background: #c0d4ff; border-top: 1px solid #8890a8; border-left: 1px solid #8890a8; }
.tile { margin: 0; width: 40px; }
.tile svg { width: 36px; height: 36px; }
.tile figcaption { padding: 1px 0 0 3px; }

/* function list */
.sheet { flex: 235; min-width: 0; background: #fff; border-left: 1px solid #c8c8c8; border-right: 1px solid #2c5078; padding: 0 4px; box-shadow: inset -3px 0 #dfe6ee; }
.list { width: 100%; border-collapse: collapse; background: #ffffe1; font: 8px/9px "Liberation Sans", Arial, sans-serif; table-layout: fixed; }
.list td { height: 11px; padding: 0 1px; }
.list td:nth-child(1) { width: 16px; padding: 0; }
.list td:nth-child(2) { width: 97px; padding-left: 2px; }
.list .ic { width: 13px; height: 11px; }
.list .cell-on { border: 1px solid #222; border-bottom-width: 2px; border-right-width: 2px; }
.gap-bar { flex: none; width: 17px; background: #505050; }

/* object panel */
.pid { flex: none; width: 281px; display: flex; gap: 3px; background: #f0f0f0; font: 8px/12px "Open Sans", "Noto Sans", sans-serif; color: #1c1c1c; }
.pid-main { flex: none; width: 251px; display: flex; flex-direction: column; padding-left: 1px; }
.view-sel { flex: none; height: 13px; margin: 0 2px; padding: 0 0 2px 4px; appearance: none; border: 1px solid #b8b8b8; border-top: 0; background: linear-gradient(45deg, transparent 45%, #666 45% 60%, transparent 60%) 235px 4px / 4px 4px no-repeat, linear-gradient(-45deg, transparent 45%, #666 45% 60%, transparent 60%) 238px 4px / 4px 4px no-repeat, #e6e6e6; }
.cap { flex: none; margin: 5px 0 0; padding-left: 6px; height: 13px; font-size: 8px; font-weight: 400; line-height: 13px; }
.objs { position: relative; flex: none; height: 264px; border: 1px solid #8a8f98; background: #fff; }
.objs li { display: flex; align-items: center; height: 13px; padding-left: 6px; gap: 4px; }
.objs .o1 { padding-left: 19px; }
.objs .o2 { padding-left: 44px; }
.objs .tg, .objs .no-tg { position: relative; z-index: 1; }
.root-ic { width: 11px; height: 12px; }
.mk { width: 8px; height: 8px; }
.o1 .mk, .o1 .ck { margin-left: 2px; }
.ck { width: 10px; height: 10px; margin-right: -2px; }
.oi { width: 12px; height: 9px; }
.o1 .oi { margin-right: -2px; }
.o2 .oi { width: 7px; height: 8px; margin-left: 2px; }
.o2 .ck { margin-right: -1px; margin-left: -1px; }
.sel { background: #1a86e8; color: #fff; padding: 0 1px; margin-left: -1px; }
.wires { position: absolute; left: 0; top: 0; width: 80px; height: 92px; }
.cursor { position: absolute; left: 110px; top: 109px; width: 10px; height: 15px; }
.tabs { flex: none; display: flex; align-items: flex-end; height: 20px; padding-top: 4px; }
.tab { height: 15px; padding: 0 3px; border: 1px solid #d8d8d8; border-bottom: 0; text-align: left; min-width: 34px; }
.tab.on { height: 17px; width: 37px; padding: 0 5px; background: #fff; border-color: #fff; }
.props { flex: 1; min-height: 0; display: flex; align-items: stretch; overflow: hidden; margin: 1px 2px 0; background: #fff; border: 1px solid #8a8f98; border-bottom: 0; border-right-color: #d0d0d0; }
.attr { flex: 1; height: 253px; border-collapse: collapse; table-layout: fixed; }
.attr th, .attr td { padding: 0 4px 0 5px; text-align: left; font-weight: 400; line-height: 12px; white-space: nowrap; border-bottom: 1px solid #efefef; border-right: 1px solid #e6e6e6; }
.attr th { height: 18px; width: 51%; border-bottom: 0; }
.attr td:last-child, .attr th:last-child { border-right: 0; }
.vbar.wide { justify-content: flex-start; padding-top: 4px; margin-right: 1px; }
.vbar.wide .chev { margin-bottom: 3px; }
.vbar.wide .vthumb { height: 135px; }
.pid-side { display: flex; flex-direction: column; gap: 5px; margin-top: -4px; }
.sb { display: grid; place-items: center; flex: none; width: 23px; height: 20px; border: 1px solid #b8b8b8; background: #e4e4e4; }
.sb svg { width: 16px; height: 15px; }
.teal-bar { flex: none; width: 6px; background: linear-gradient(90deg, #6a7478 0 1px, #2c4450 1px 5px, #8ca8c0 5px); }

/* model viewer */
.viewer { flex: 637; min-width: 0; display: flex; background: #c0d8fb; }
.tools { flex: none; display: flex; flex-direction: column; justify-content: space-between; align-items: center; width: 21px; height: 291px; margin-top: 2px; padding-left: 3px; }
.tb { width: 16px; height: 16px; display: grid; place-items: center; }
.tb svg { width: 15px; height: 15px; }
.tb.hot { background: #f8c890; outline: 1px solid #b06840; }
.scene { flex: 1; min-width: 0; width: 100%; height: calc(100% - 3px); margin-top: 3px; }
.edge-right { flex: none; width: 7px; background: linear-gradient(90deg, #c0d8fb 0 3px, #445 3px 4px, #000 4px); }
.pp use { fill: none; stroke-linejoin: round; }
.d5 { stroke: #9c7200; stroke-width: 5; } .m5 { stroke: #eeb800; stroke-width: 2.500; }
.d6 { stroke: #a07400; stroke-width: 6; } .m6 { stroke: #e0a800; stroke-width: 4.500; } .h6 { stroke: #ffd400; stroke-width: 2; }
.d8 { stroke: #b08000; stroke-width: 8; } .m8 { stroke: #e8b000; stroke-width: 6; } .h8 { stroke: #ffd400; stroke-width: 3; }
.d14 { stroke: #c08e00; stroke-width: 14; } .m14 { stroke: #e8b000; stroke-width: 11; } .h14 { stroke: #ffd000; stroke-width: 6; }
.d16 { stroke: #c08e00; stroke-width: 16; } .m16 { stroke: #e8b000; stroke-width: 13; } .h16 { stroke: #ffd000; stroke-width: 8; }
.d20 { stroke: #b88600; stroke-width: 20; } .m20 { stroke: #e2aa00; stroke-width: 17; } .h20 { stroke: #fccc00; stroke-width: 11; }
.m14, .m16, .m20 { transform: translate(1px, 0); }
.h14, .h16, .h20 { transform: translate(2px, 0); }
.wheel { fill: none; stroke: #c8a018; stroke-width: 1.500; }
.fl { fill: #f4bc00; stroke: #b88800; stroke-width: 1; }
.fl.hi { stroke: #a4d838; }
.bolt { fill: #c88a30; stroke: #94e060; stroke-width: .8; }
```
